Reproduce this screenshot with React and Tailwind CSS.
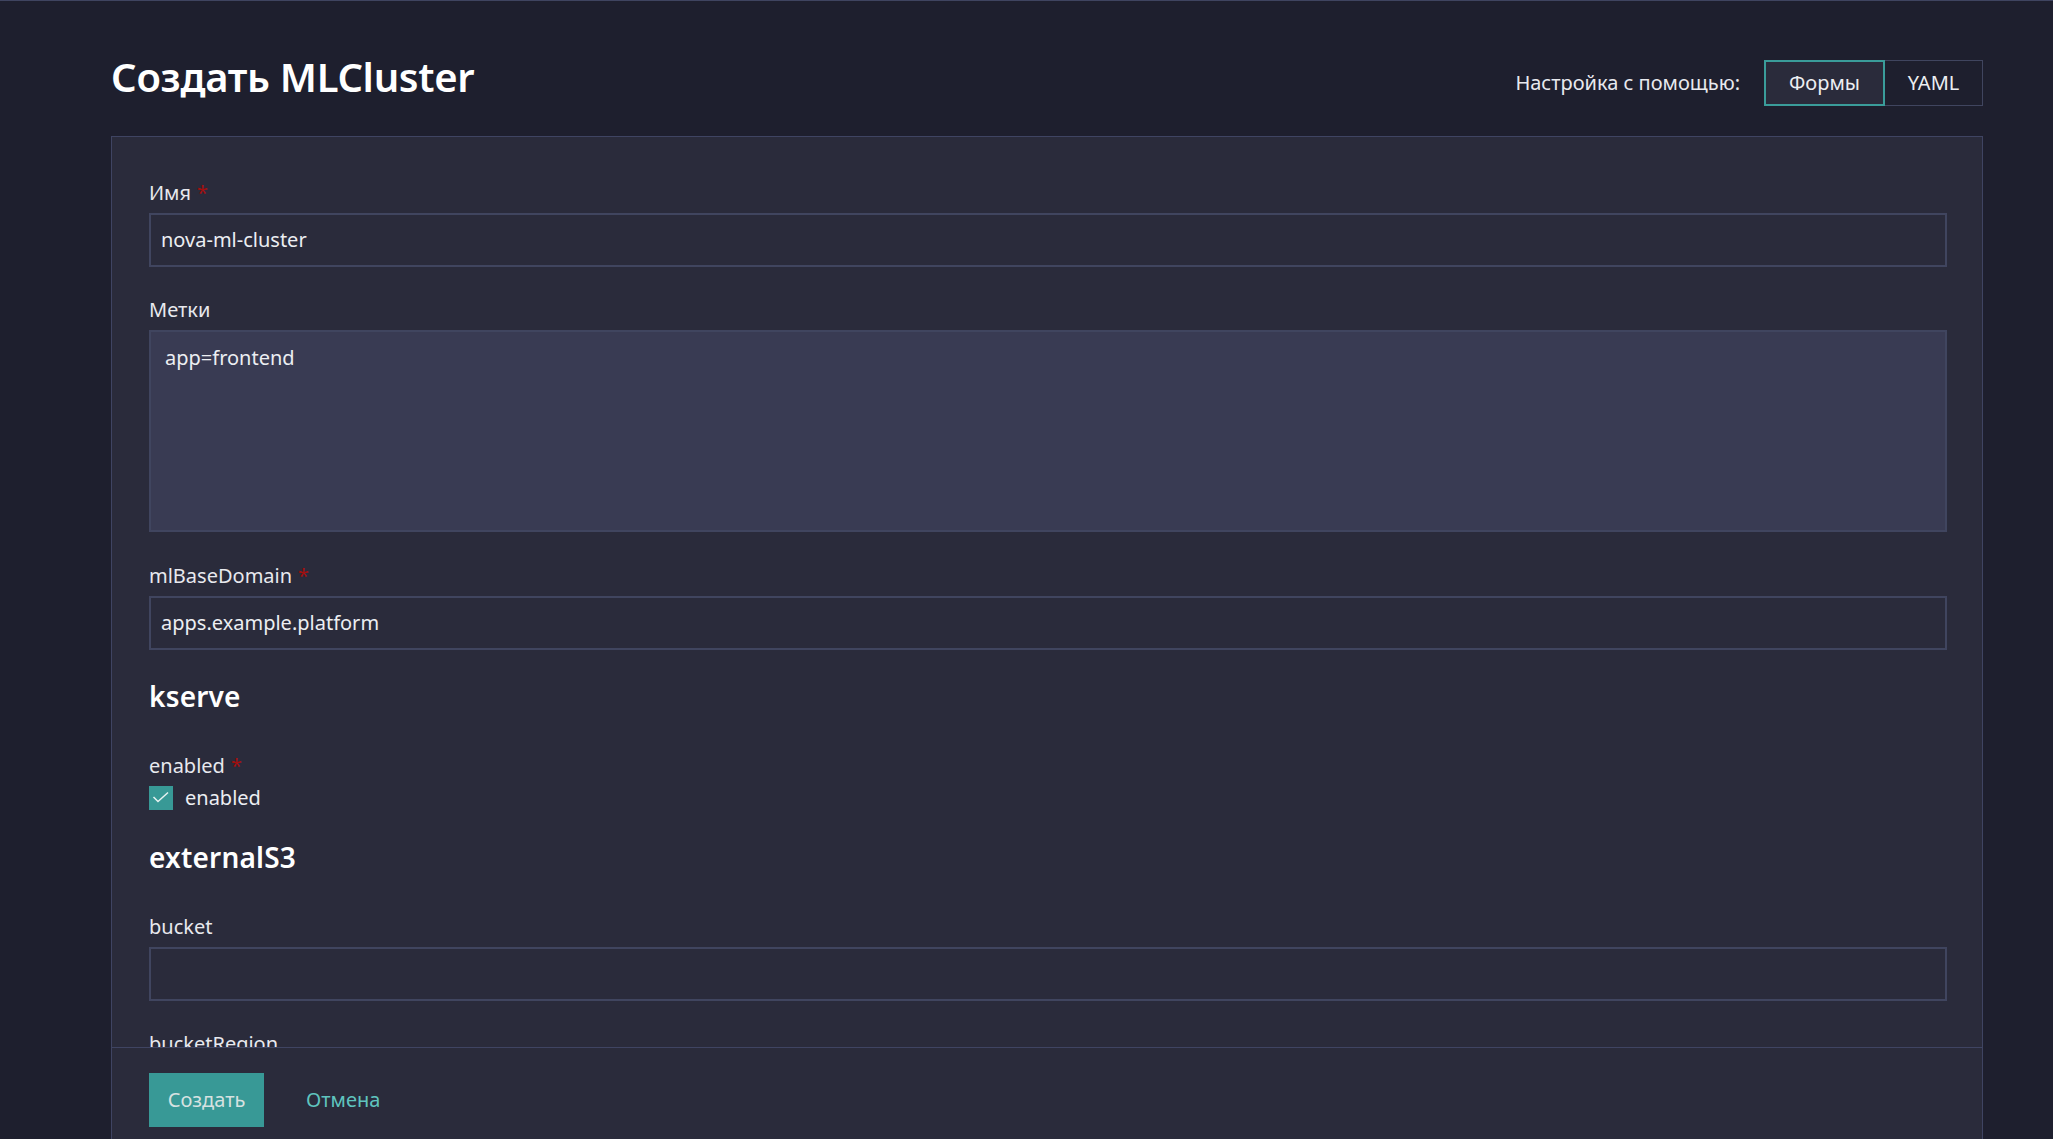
import React from "react";

const font = { fontFamily: '"Noto Sans", "Open Sans", sans-serif' };

function Label({ children, required }) {
  return (
    <div className="text-[20px] leading-[28px] text-[#e8e9ee]">
      {children}
      {required && <span className="ml-[6px] text-[#a30f0f]">*</span>}
    </div>
  );
}

function Input({ value }) {
  return (
    <div className="mt-[6px] h-[54px] border-2 border-[#40455f] bg-[#2a2b3b] px-[10px] flex items-center text-[20px] text-[#eceef2]">
      {value}
    </div>
  );
}

export default function App() {
  return (
    <div
      className="h-[1139px] w-[2053px] overflow-hidden bg-[#1e1f2e] border-t border-[#3f4460] flex flex-col"
      style={font}
    >
      <div className="h-[135px] shrink-0 pl-[111px] pr-[70px] flex items-start justify-between">
        <h1 className="mt-[50px] text-[40px] leading-[52px] font-semibold text-white tracking-[-0.3px]">
          Создать MLCluster
        </h1>
        <div className="mt-[59px] flex items-center">
          <span className="mr-[24px] text-[20px] text-[#e8e9ee]">Настройка с помощью:</span>
          <div className="flex">
            <button className="h-[46px] w-[121px] border-2 border-[#3a9c9a] bg-[#2a2b3b] text-[20px] text-[#eceef2]">
              Формы
            </button>
            <button className="h-[46px] w-[98px] border border-l-0 border-[#40455f] bg-[#1e1f2e] text-[20px] text-[#eceef2]">
              YAML
            </button>
          </div>
        </div>
      </div>

      <div className="ml-[111px] mr-[70px] flex-1 border border-b-0 border-[#3f4462] bg-[#2a2b3b] flex flex-col min-h-0">
        <div className="h-[910px] shrink-0 overflow-hidden pl-[37px] pr-[35px] pt-[42px]">
          <Label required>Имя</Label>
          <Input value="nova-ml-cluster" />

          <div className="mt-[29px]">
            <Label>Метки</Label>
          </div>
          <div className="mt-[6px] h-[202px] border-2 border-[#40455f] bg-[#393b53] px-[14px] pt-[12px] text-[20px] leading-[28px] text-[#eceef2]">
            app=frontend
          </div>

          <div className="mt-[30px]">
            <Label required>mlBaseDomain</Label>
          </div>
          <Input value="apps.example.platform" />

          <h2 className="mt-[28px] text-[28px] leading-[36px] font-semibold text-white tracking-[0.2px]">kserve</h2>

          <div className="mt-[38px]">
            <Label required>enabled</Label>
          </div>
          <div className="mt-[6px] flex items-center h-[24px]">
            <div className="h-[24px] w-[24px] bg-[#389996] flex items-center justify-center">
              <svg width="24" height="24" viewBox="0 0 24 24" fill="none">
                <path d="M4.5 11 L9 15.5 L19 6.5" stroke="#e6f2f1" strokeWidth="1.5" />
              </svg>
            </div>
            <span className="ml-[12px] text-[20px] text-[#eceef2]">enabled</span>
          </div>

          <h2 className="mt-[29px] text-[28px] leading-[36px] font-semibold text-white tracking-[0.2px]">externalS3</h2>

          <div className="mt-[38px]">
            <Label>bucket</Label>
          </div>
          <Input value="" />

          <div className="mt-[29px]">
            <Label>bucketRegion</Label>
          </div>
        </div>
        <div className="flex-1 border-t border-[#3f4462] pl-[37px] pt-[25px] flex items-start">
          <button className="h-[54px] w-[115px] bg-[#389996] text-[20px] text-[#d6e2e1]">Создать</button>
          <button className="ml-[32px] h-[54px] px-[10px] text-[20px] text-[#5fc4bf]">Отмена</button>
        </div>
      </div>
    </div>
  );
}
